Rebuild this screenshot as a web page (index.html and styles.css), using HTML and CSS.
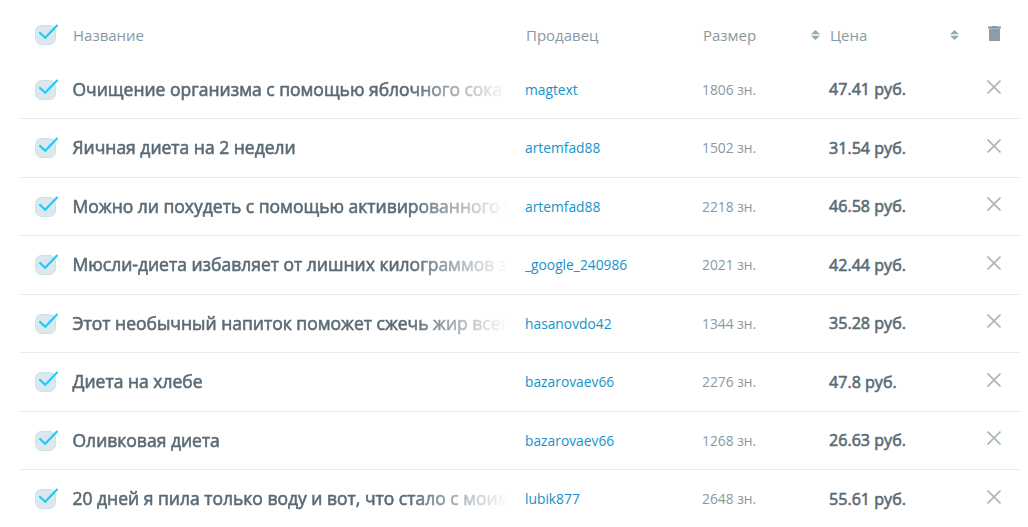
FILE: index.html
```
<!doctype html>
<html lang="ru">
<head>
    <meta charset="utf-8">
    <title>Корзина</title>
    <link rel="stylesheet" href="styles.css">
</head>
<body>
    <!-- иконки -->
    <svg class="sprite">
        <symbol id="check" viewBox="0 0 24 22">
            <rect x="0.5" y="1.5" width="20" height="19" rx="6" fill="#dbe9ee" stroke="#cee0e6"/>
            <path d="M4.3 8.3L10.2 13.8L22.5 1" fill="none" stroke="#1cccf9" stroke-width="2.2"/>
        </symbol>
        <symbol id="cross" viewBox="0 0 14 14">
            <path d="M0.5 0.5L13.5 13.5M13.5 0.5L0.5 13.5" fill="none" stroke="#abb7be" stroke-width="1.7"/>
        </symbol>
        <symbol id="sort" viewBox="0 0 9 10">
            <path d="M4.5 0L9 4.2H0zM0 5.8H9L4.5 10z" fill="#92abb2"/>
        </symbol>
        <symbol id="trash" viewBox="0 0 13 15">
            <path d="M0 0.6H4V0H9V0.6H13V2.6H0z" fill="#8496a2"/>
            <path d="M1 2.6H12V15H1z" fill="#8f9ca8"/>
        </symbol>
    </svg>
    <div class="table">
        <div class="row head">
            <svg class="check"><use href="#check"/></svg>
            <p>Название</p>
            <p>Продавец</p>
            <p class="sorted">Размер <svg class="sort"><use href="#sort"/></svg></p>
            <p class="sorted">Цена <svg class="sort"><use href="#sort"/></svg></p>
            <svg class="trash"><use href="#trash"/></svg>
        </div>
        <div class="row">
            <svg class="check"><use href="#check"/></svg>
            <p class="name">Очищение организма с помощью яблочного сока</p>
            <a class="seller" href="#">magtext</a>
            <p class="size">1806 зн.</p>
            <p class="price">47.41 руб.</p>
            <svg class="cross"><use href="#cross"/></svg>
        </div>
        <div class="row">
            <svg class="check"><use href="#check"/></svg>
            <p class="name">Яичная диета на 2 недели</p>
            <a class="seller" href="#">artemfad88</a>
            <p class="size">1502 зн.</p>
            <p class="price">31.54 руб.</p>
            <svg class="cross"><use href="#cross"/></svg>
        </div>
        <div class="row">
            <svg class="check"><use href="#check"/></svg>
            <p class="name">Можно ли похудеть с помощью активированного у</p>
            <a class="seller" href="#">artemfad88</a>
            <p class="size">2218 зн.</p>
            <p class="price">46.58 руб.</p>
            <svg class="cross"><use href="#cross"/></svg>
        </div>
        <div class="row">
            <svg class="check"><use href="#check"/></svg>
            <p class="name">Мюсли-диета избавляет от лишних килограммов з</p>
            <a class="seller" href="#">_google_240986</a>
            <p class="size">2021 зн.</p>
            <p class="price">42.44 руб.</p>
            <svg class="cross"><use href="#cross"/></svg>
        </div>
        <div class="row">
            <svg class="check"><use href="#check"/></svg>
            <p class="name">Этот необычный напиток поможет сжечь жир всег</p>
            <a class="seller" href="#">hasanovdo42</a>
            <p class="size">1344 зн.</p>
            <p class="price">35.28 руб.</p>
            <svg class="cross"><use href="#cross"/></svg>
        </div>
        <div class="row">
            <svg class="check"><use href="#check"/></svg>
            <p class="name">Диета на хлебе</p>
            <a class="seller" href="#">bazarovaev66</a>
            <p class="size">2276 зн.</p>
            <p class="price">47.8 руб.</p>
            <svg class="cross"><use href="#cross"/></svg>
        </div>
        <div class="row">
            <svg class="check"><use href="#check"/></svg>
            <p class="name">Оливковая диета</p>
            <a class="seller" href="#">bazarovaev66</a>
            <p class="size">1268 зн.</p>
            <p class="price">26.63 руб.</p>
            <svg class="cross"><use href="#cross"/></svg>
        </div>
        <div class="row">
            <svg class="check"><use href="#check"/></svg>
            <p class="name">20 дней я пила только воду и вот, что стало с моим</p>
            <a class="seller" href="#">lubik877</a>
            <p class="size">2648 зн.</p>
            <p class="price">55.61 руб.</p>
            <svg class="cross"><use href="#cross"/></svg>
        </div>
    </div>
</body>
</html>
```
FILE: styles.css
```
*{margin:0; padding:0; box-sizing:border-box;}
a{text-decoration:none;}
body{
    height:527px;
    overflow:hidden;
    background:#fff;
    font-family:"Open Sans", "Noto Sans", sans-serif;
    color:#8999a4;
}
.sprite{
    display:none;
}
.table{
    width:1000px;
    margin-left:20px;
    padding-top:10px;
}
.row{
    display:grid;
    grid-template-columns:52px 453px 177px 127px 157px 34px;
    align-items:center;
    height:58.5px;
    border-bottom:1px solid #e4ecef;
}
.head{
    height:50.5px;
    border-bottom:0;
    font-size:15px;
}
.head p{
    padding-left:1px;
}
.head .sorted{
    display:flex;
    align-items:center;
    justify-content:space-between;
}
.check{
    width:24px;
    height:22px;
    margin:1px 0 0 15px;
}
.head .check{
    margin-top:0;
}
.sort{
    width:9px;
    height:10px;
    margin:0 9px 1px 0;
}
.sorted:nth-child(5) .sort{
    margin-right:27px;
}
.trash{
    width:13px;
    height:15px;
    margin:0 0 4px 2px;
}
.cross{
    width:14px;
    height:14px;
    margin:0 0 4px 1px;
}
.name,
.price{
    color:#5b6b76;
    white-space:nowrap;
    -webkit-text-stroke:0.6px #5b6b76;
}
.name{
    width:437px;
    margin-bottom:0.6px;
    padding-left:0.5px;
    overflow:hidden;
    font-size:17.5px;
    -webkit-mask-image:linear-gradient(to right, #000 337px, transparent);
    mask-image:linear-gradient(to right, #000 337px, transparent);
}
.price{
    font-size:16.1px;
}
.seller{
    font-size:13.8px;
    color:#1593ca;
}
.size{
    font-size:13.8px;
}
```
